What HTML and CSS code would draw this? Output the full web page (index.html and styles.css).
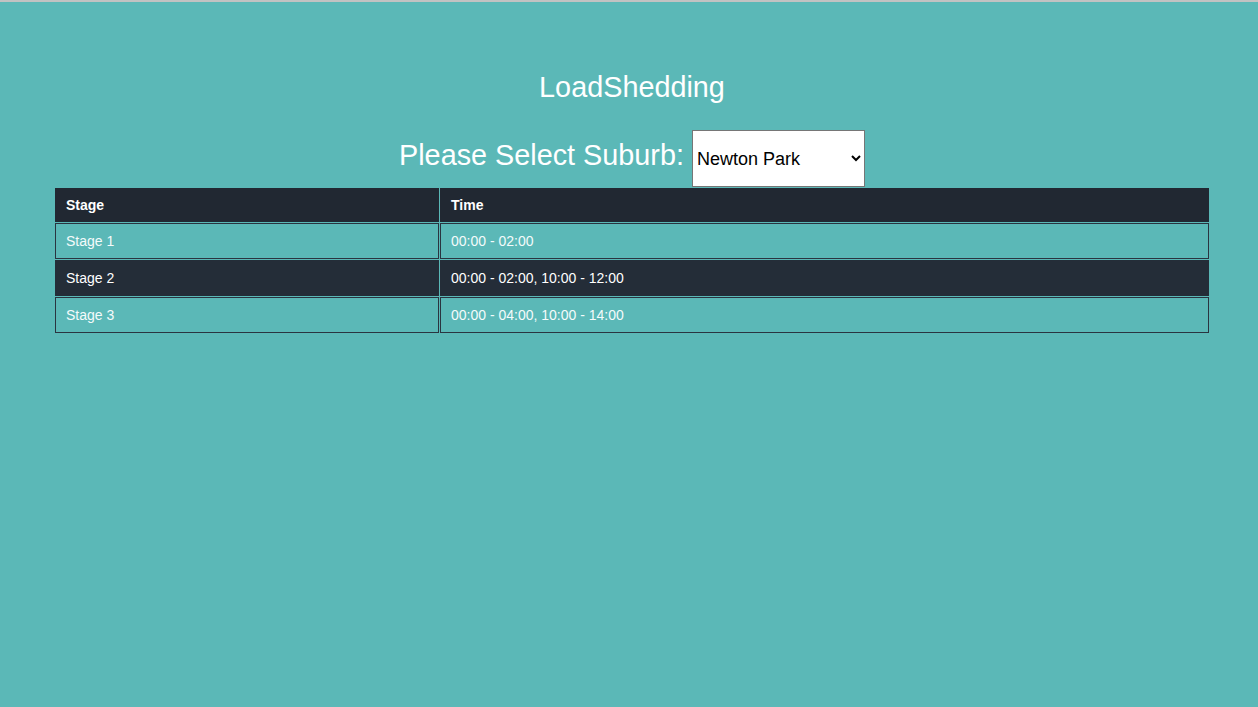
FILE: index.html
```html
<!DOCTYPE html>
<html lang="en">
<head>
<meta charset="utf-8">
<title>LoadShedding</title>
<link rel="stylesheet" href="styles.css">
</head>
<body>
<div class="page">
  <h1 class="title">LoadShedding</h1>
  <div class="picker">
    <label class="picker-label" for="suburb">Please Select Suburb:</label>
    <select id="suburb" class="picker-select">
      <option>Newton Park</option>
      <option>Summerstrand</option>
      <option>Walmer</option>
    </select>
  </div>
  <div class="table-wrap">
    <table class="schedule">
      <thead>
        <tr>
          <th class="col-stage">Stage</th>
          <th>Time</th>
        </tr>
      </thead>
      <tbody>
        <tr class="row-light">
          <td>Stage 1</td>
          <td>00:00 - 02:00</td>
        </tr>
        <tr class="row-dark">
          <td>Stage 2</td>
          <td>00:00 - 02:00, 10:00 - 12:00</td>
        </tr>
        <tr class="row-light">
          <td>Stage 3</td>
          <td>00:00 - 04:00, 10:00 - 14:00</td>
        </tr>
      </tbody>
    </table>
  </div>
</div>
</body>
</html>
```

FILE: styles.css
```css
html, body {
  margin: 0;
  padding: 0;
  height: 100%;
}

body {
  background: #5bb8b7;
  font-family: "Liberation Sans", Arial, sans-serif;
  color: #ffffff;
}

.page {
  border-top: 2px solid #c2c2c2;
  min-height: 100%;
  box-sizing: border-box;
}

.title {
  margin: 69px 0 0 0;
  font-size: 28.8px;
  font-weight: normal;
  line-height: normal;
  text-align: center;
  padding-left: 6px;
}

.picker {
  margin-top: 26px;
  text-align: center;
  font-size: 28.8px;
  padding-left: 6px;
}

.picker-label {
  font-size: 28.8px;
}

.picker-select {
  width: 173px;
  height: 57px;
  font-family: "Liberation Sans", Arial, sans-serif;
  font-size: 18px;
  color: #000;
  background: #ffffff;
  border: 1px solid #767676;
  border-radius: 0;
  padding: 0;
  margin: 0;
}

.table-wrap {
  padding: 0 48px 0 54px;
}

.schedule {
  width: 100%;
  table-layout: fixed;
  border-collapse: separate;
  border-spacing: 1px;
  font-size: 14px;
}

.schedule th,
.schedule td {
  box-sizing: border-box;
  text-align: left;
  vertical-align: middle;
  line-height: 16px;
}

.schedule th {
  background: #212832;
  font-weight: bold;
  padding: 9px 11px;
  border: 0;
  height: 34px;
}

.schedule th.col-stage {
  width: 384px;
}

.schedule td {
  padding: 9px 10px;
  height: 36px;
  border: 1px solid #2a3440;
}

.row-light td {
  background: #5bb8b7;
  color: #f4fbfb;
}

.row-dark td {
  background: #242d38;
  border-color: #242d38;
  color: #ffffff;
}
```
